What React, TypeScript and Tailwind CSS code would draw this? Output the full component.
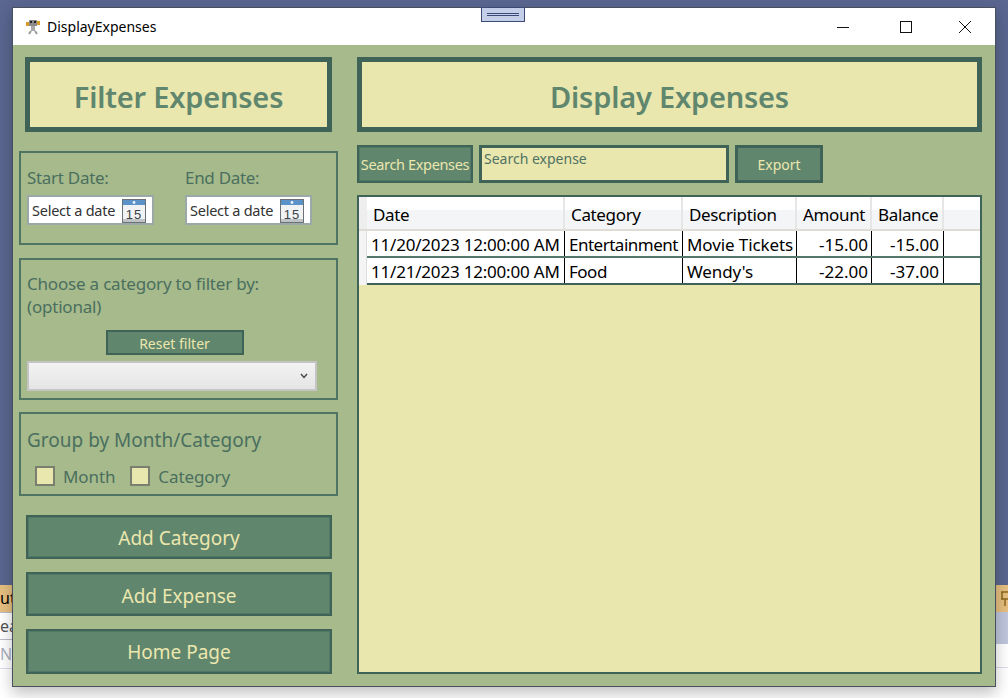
import React from "react";

const FONT = "font-['Noto_Sans','Open_Sans',sans-serif]";

function CalendarIcon() {
  return (
    <svg width="24" height="24" viewBox="0 0 24 24" className="shrink-0">
      <rect x="0.5" y="0.5" width="23" height="23" fill="#dfe3e6" stroke="#6b7174" />
      <rect x="1" y="1" width="22" height="5" fill="#5b93c8" />
      <circle cx="12" cy="3.5" r="1.4" fill="#eef5fb" />
      <rect x="1" y="6" width="22" height="17" fill="#f1f2f3" />
      <rect x="1" y="20" width="22" height="3" fill="#bfc3c6" />
      <text x="12" y="19.5" textAnchor="middle" fontSize="13" letterSpacing="1" fontFamily="Liberation Sans, sans-serif" fill="#3c4347">15</text>
    </svg>
  );
}

function DateField() {
  return (
    <div className="flex h-[30px] w-[127px] items-center border-2 border-[#9aa8a8] bg-white pl-[3px] pt-[1px] text-[14.5px] tracking-[-0.25px] text-[#333]">
      <span className="w-[90px] whitespace-nowrap">Select a date</span>
      <CalendarIcon />
    </div>
  );
}

function GreenButton({ children, className }: { children: React.ReactNode; className: string }) {
  return (
    <div className={`flex items-center justify-center whitespace-nowrap border-[#3f6357] bg-[#60866e] text-[#ece7ad] ${className}`}>
      {children}
    </div>
  );
}

function Check({ label }: { label: string }) {
  return (
    <div className="flex items-center gap-[8px]">
      <div className="h-[20px] w-[20px] border-2 border-[#7b7f70] bg-[#e9e6ae]" />
      <span className="pt-[1px] text-[17px] tracking-[-0.1px] text-[#4a6f5e]">{label}</span>
    </div>
  );
}

const cols = [
  { t: "Date", w: "w-[198px]" },
  { t: "Category", w: "w-[118px]" },
  { t: "Description", w: "w-[114px]" },
  { t: "Amount", w: "w-[75px]" },
  { t: "Balance", w: "w-[72px]" },
];

const rows = [
  ["11/20/2023 12:00:00 AM", "Entertainment", "Movie Tickets", "-15.00", "-15.00"],
  ["11/21/2023 12:00:00 AM", "Food", "Wendy's", "-22.00", "-37.00"],
];

const groupClass = "ml-[6px] w-[319px] border-2 border-[#4f7464] px-[6px]";
const bigButton = "h-[44px] border-[2px] text-[19px] shadow-[inset_0_0_0_1px_#527868]";

export default function App() {
  return (
    <div className={`relative h-[698px] w-[1008px] overflow-hidden bg-white ${FONT}`}>
      {/* desktop behind the window */}
      <div className="h-[585px] bg-[#5a6690]" />
      <div className="flex h-[27px] items-center justify-end bg-[#e6bf7f]">
        <svg width="8" height="18" viewBox="0 0 8 18">
          <path d="M1 2H8M2 2V9M1 9H8M5 9V16" fill="none" stroke="#8a6a1e" strokeWidth="1.5" />
        </svg>
      </div>
      <div className="h-[32px] bg-[#bfc6dd]" />
      <div className="h-[24px] border-b border-[#d8dcec]" />

      <div className="absolute left-0 top-[585px] h-[27px] w-[13px] overflow-hidden bg-[#e6bf7f] text-[16px] leading-[27px] text-black">ut</div>
      <div className="absolute left-0 top-[612px] h-[28px] w-[13px] overflow-hidden border-y border-[#b9bcc6] bg-white text-[16px] leading-[26px] text-[#555]">ea</div>
      <div className="absolute left-0 top-[640px] h-[29px] w-[13px] overflow-hidden border-b border-[#d8dcec] bg-white text-[16px] leading-[28px] text-[#a9afc0]">N</div>

      {/* application window */}
      <div className="absolute left-[12px] top-[7px] flex h-[680px] w-[984px] flex-col border border-[#4a4f60] bg-[#a6ba8c] shadow-[0_6px_14px_rgba(0,0,0,0.25)]">
        <div className="flex h-[37px] shrink-0 items-center bg-white">
          <svg width="16" height="17" viewBox="0 0 16 17" className="ml-[12px]">
            <rect x="4" y="2" width="8" height="6" fill="#8a8a8a" />
            <rect x="5" y="3" width="2" height="2" fill="#222" />
            <rect x="9" y="3" width="2" height="2" fill="#222" />
            <rect x="1" y="4" width="3" height="4" fill="#d99a2b" />
            <rect x="12" y="3" width="3" height="4" fill="#d99a2b" />
            <rect x="6" y="8" width="4" height="5" fill="#a8a8a8" />
            <path d="M6 13 L4 16 M10 13 L12 16" stroke="#9a9a9a" strokeWidth="2" />
          </svg>
          <span className="ml-[6px] text-[14px] text-black">DisplayExpenses</span>
          <div className="ml-auto flex items-center">
            <svg width="46" height="37" viewBox="0 0 46 37"><path d="M17 19.5H29" stroke="#111" /></svg>
            <svg width="58" height="37" viewBox="0 0 58 37" className="ml-[12px]"><rect x="22.5" y="13.5" width="11" height="11" fill="none" stroke="#111" /></svg>
            <svg width="58" height="37" viewBox="0 0 58 37" className="mr-[1px]"><path d="M23 13L35 25M35 13L23 25" stroke="#111" /></svg>
          </div>
        </div>

        <div className="flex min-h-0 flex-1">
          {/* left column */}
          <div className="flex w-[344px] shrink-0 flex-col">
            <div className="ml-[12px] mt-[12px] flex h-[75px] w-[307px] items-center justify-center border-[5px] border-[#3f6357] bg-[#e9e6ae] pt-[4px] text-[29px] font-semibold tracking-[-0.2px] text-[#60866e]">
              Filter Expenses
            </div>

            <div className={`${groupClass} mt-[19px] h-[94px]`}>
              <div className="mt-[13px] flex">
                <div className="w-[158px]">
                  <div className="text-[17px] leading-[24px] tracking-[-0.3px] text-[#4a6f5e]">Start Date:</div>
                  <div className="mt-[5px]"><DateField /></div>
                </div>
                <div>
                  <div className="text-[17px] leading-[24px] tracking-[-0.3px] text-[#4a6f5e]">End Date:</div>
                  <div className="mt-[5px]"><DateField /></div>
                </div>
              </div>
            </div>

            <div className={`${groupClass} mt-[13px] h-[142px]`}>
              <div className="mt-[12px] text-[17px] leading-[23px] tracking-[-0.2px] text-[#4a6f5e]">
                Choose a category to filter by:
                <br />
                (optional)
              </div>
              <div className="mt-[12px] flex justify-center pr-[8px]">
                <GreenButton className="h-[25px] w-[138px] border-[2px] pt-[1px] text-[14px]">Reset filter</GreenButton>
              </div>
              <div className="mt-[6px] flex h-[30px] w-[290px] items-center justify-end border-2 border-[#c4c4c4] bg-gradient-to-b from-[#f2f2f2] to-[#e5e5e5] pr-[7px]">
                <svg width="8" height="6" viewBox="0 0 8 6"><path d="M1 1L4 4.5L7 1" fill="none" stroke="#444" strokeWidth="1.4" /></svg>
              </div>
            </div>

            <div className={`${groupClass} mt-[12px] h-[84px]`}>
              <div className="mt-[13px] text-[19px] leading-[26px] text-[#4a6f5e]">Group by Month/Category</div>
              <div className="ml-[8px] mt-[10px] flex gap-[15px]">
                <Check label="Month" />
                <Check label="Category" />
              </div>
            </div>

            <div className="ml-[13px] mt-[19px] flex w-[306px] flex-col gap-[13px]">
              <GreenButton className={`${bigButton} pt-[2px]`}>Add Category</GreenButton>
              <GreenButton className={`${bigButton} pt-[4px]`}>Add Expense</GreenButton>
              <GreenButton className={`${bigButton} !h-[45px] pt-[2px]`}>Home Page</GreenButton>
            </div>
          </div>

          {/* right column */}
          <div className="flex w-[625px] shrink-0 flex-col">
            <div className="mt-[12px] flex h-[75px] items-center justify-center border-[5px] border-[#3f6357] bg-[#e9e6ae] pt-[4px] text-[29px] font-semibold tracking-[-0.2px] text-[#60866e]">
              Display Expenses
            </div>

            <div className="mt-[13px] flex h-[38px] gap-[6px]">
              <GreenButton className="w-[116px] border-[2px] pt-[2px] text-[14.5px] tracking-[-0.35px] shadow-[inset_0_0_0_1px_#527868]">Search Expenses</GreenButton>
              <div className="w-[250px] border-[3px] border-[#3f6357] bg-[#e9e6ae] pl-[2px] text-[14px] leading-[21px] text-[#4f7263]">Search expense</div>
              <GreenButton className="w-[88px] border-[3px] text-[14px]">Export</GreenButton>
            </div>

            <div className="mt-[12px] h-[479px] border-2 border-[#3f6357] bg-[#e9e6ae]">
              <div className="flex h-[34px] border-b-2 border-[#dedcd4] bg-gradient-to-b from-white from-40% to-[#f4f5f7] to-40%">
                <div className="w-[8px] bg-[#eeeeee]" />
                {cols.map((c) => (
                  <div key={c.t} className={`${c.w} flex items-center border-r-2 border-[#e6e6e6] pl-[6px] pt-[4px] text-[17px] tracking-[-0.35px] text-black`}>
                    {c.t}
                  </div>
                ))}
                <div className="flex-1" />
              </div>
              {rows.map((r, i) => (
                <div key={r[0]} className="flex h-[27px]">
                  <div className="w-[8px] border-r border-[#dddddd] bg-[#f4f4f4]" />
                  <div className={`flex flex-1 border-b-2 bg-white text-[17px] leading-[28px] text-black ${i === 0 ? "border-[#55776a]" : "border-[#3f6357]"}`}>
                    <div className="w-[198px] whitespace-nowrap border-r border-black pl-[4px] tracking-[-0.2px]">{r[0]}</div>
                    <div className="w-[118px] whitespace-nowrap border-r border-black pl-[4px] tracking-[-0.5px]">{r[1]}</div>
                    <div className="w-[114px] whitespace-nowrap border-r border-black pl-[4px] tracking-[-0.1px]">{r[2]}</div>
                    <div className="w-[75px] border-r border-black pr-[3px] text-right">{r[3]}</div>
                    <div className="w-[72px] border-r border-black pr-[4px] text-right">{r[4]}</div>
                  </div>
                </div>
              ))}
            </div>
          </div>
        </div>
      </div>

      {/* docked tab over the title bar */}
      <div className="absolute left-[481px] top-[7px] flex h-[15px] w-[44px] flex-col items-center justify-center gap-[1px] border border-[#3c4a78] bg-[#c5cee8]">
        <div className="h-[1px] w-[32px] bg-[#3c4a78]" />
        <div className="h-[1px] w-[32px] bg-[#3c4a78]" />
      </div>
    </div>
  );
}
